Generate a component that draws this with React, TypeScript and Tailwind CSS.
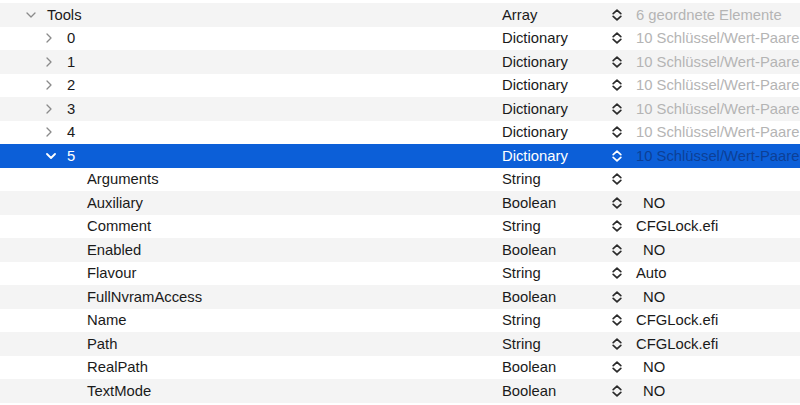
import React from 'react';

type Row = {
    name: string;
    level: number;
    expander?: 'open' | 'closed';
    type: string;
    value?: string;
    placeholder?: boolean;
    bool?: boolean;
    selected?: boolean;
};

const rows: Row[] = [
    { name: 'Tools', level: 0, expander: 'open', type: 'Array', value: '6 geordnete Elemente', placeholder: true },
    { name: '0', level: 1, expander: 'closed', type: 'Dictionary', value: '10 Schlüssel/Wert-Paare', placeholder: true },
    { name: '1', level: 1, expander: 'closed', type: 'Dictionary', value: '10 Schlüssel/Wert-Paare', placeholder: true },
    { name: '2', level: 1, expander: 'closed', type: 'Dictionary', value: '10 Schlüssel/Wert-Paare', placeholder: true },
    { name: '3', level: 1, expander: 'closed', type: 'Dictionary', value: '10 Schlüssel/Wert-Paare', placeholder: true },
    { name: '4', level: 1, expander: 'closed', type: 'Dictionary', value: '10 Schlüssel/Wert-Paare', placeholder: true },
    { name: '5', level: 1, expander: 'open', type: 'Dictionary', value: '10 Schlüssel/Wert-Paare', placeholder: true, selected: true },
    { name: 'Arguments', level: 2, type: 'String', value: '' },
    { name: 'Auxiliary', level: 2, type: 'Boolean', value: 'NO', bool: true },
    { name: 'Comment', level: 2, type: 'String', value: 'CFGLock.efi' },
    { name: 'Enabled', level: 2, type: 'Boolean', value: 'NO', bool: true },
    { name: 'Flavour', level: 2, type: 'String', value: 'Auto' },
    { name: 'FullNvramAccess', level: 2, type: 'Boolean', value: 'NO', bool: true },
    { name: 'Name', level: 2, type: 'String', value: 'CFGLock.efi' },
    { name: 'Path', level: 2, type: 'String', value: 'CFGLock.efi' },
    { name: 'RealPath', level: 2, type: 'Boolean', value: 'NO', bool: true },
    { name: 'TextMode', level: 2, type: 'Boolean', value: 'NO', bool: true },
];

const indent = ['pl-[26px]', 'pl-[46px]', 'pl-[66px]'];

function Disclosure({ open, selected }: { open: boolean; selected?: boolean }) {
    const color = selected ? '#ffffff' : '#8a8a8a';
    return open ? (
        <svg width="10" height="6" viewBox="0 0 10 6" fill="none">
            <path d="M1 1 L5 5 L9 1" stroke={color} strokeWidth={selected ? 1.8 : 1.3} strokeLinecap="round" strokeLinejoin="round" />
        </svg>
    ) : (
        <svg width="6" height="10" viewBox="0 0 6 10" fill="none">
            <path d="M1 1 L5 5 L1 9" stroke={color} strokeWidth="1.3" strokeLinecap="round" strokeLinejoin="round" />
        </svg>
    );
}

function Stepper({ selected }: { selected?: boolean }) {
    const color = selected ? '#ffffff' : '#2b2b2b';
    return (
        <svg width="10" height="12" viewBox="0 0 10 12" fill="none">
            <path d="M1.2 4.6 L5 1.2 L8.8 4.6" stroke={color} strokeWidth="1.7" strokeLinecap="round" strokeLinejoin="round" />
            <path d="M1.2 7.4 L5 10.8 L8.8 7.4" stroke={color} strokeWidth="1.7" strokeLinecap="round" strokeLinejoin="round" />
        </svg>
    );
}

export default function App() {
    return (
        <div className="w-[800px] h-[405px] overflow-hidden bg-white pt-[3px] font-['Liberation_Sans',Arial,sans-serif] text-[14.8px] text-[#1a1a1a]">
            {rows.map((row, i) => {
                const bg = row.selected ? 'bg-[#0c5fd8]' : i % 2 === 0 ? 'bg-[#f4f4f4]' : 'bg-white';
                return (
                    <div key={i} className={`flex items-center h-[23.5px] whitespace-nowrap ${bg} ${row.selected ? 'text-white' : ''}`}>
                        <div className={`flex items-center w-[502px] shrink-0 ${indent[row.level]}`}>
                            <div className="w-[21px] flex items-center">
                                {row.expander && <Disclosure open={row.expander === 'open'} selected={row.selected} />}
                            </div>
                            <span>{row.name}</span>
                        </div>
                        <div className="w-[110px] shrink-0">{row.type}</div>
                        <div className="w-[24px] shrink-0 flex items-center">
                            <Stepper selected={row.selected} />
                        </div>
                        <div
                            className={`${row.bool ? 'pl-[7px]' : ''} ${
                                row.placeholder ? (row.selected ? 'text-[#0d3f96]' : 'text-[#b4b4b4]') : ''
                            }`}
                        >
                            {row.value}
                        </div>
                    </div>
                );
            })}
        </div>
    );
}
